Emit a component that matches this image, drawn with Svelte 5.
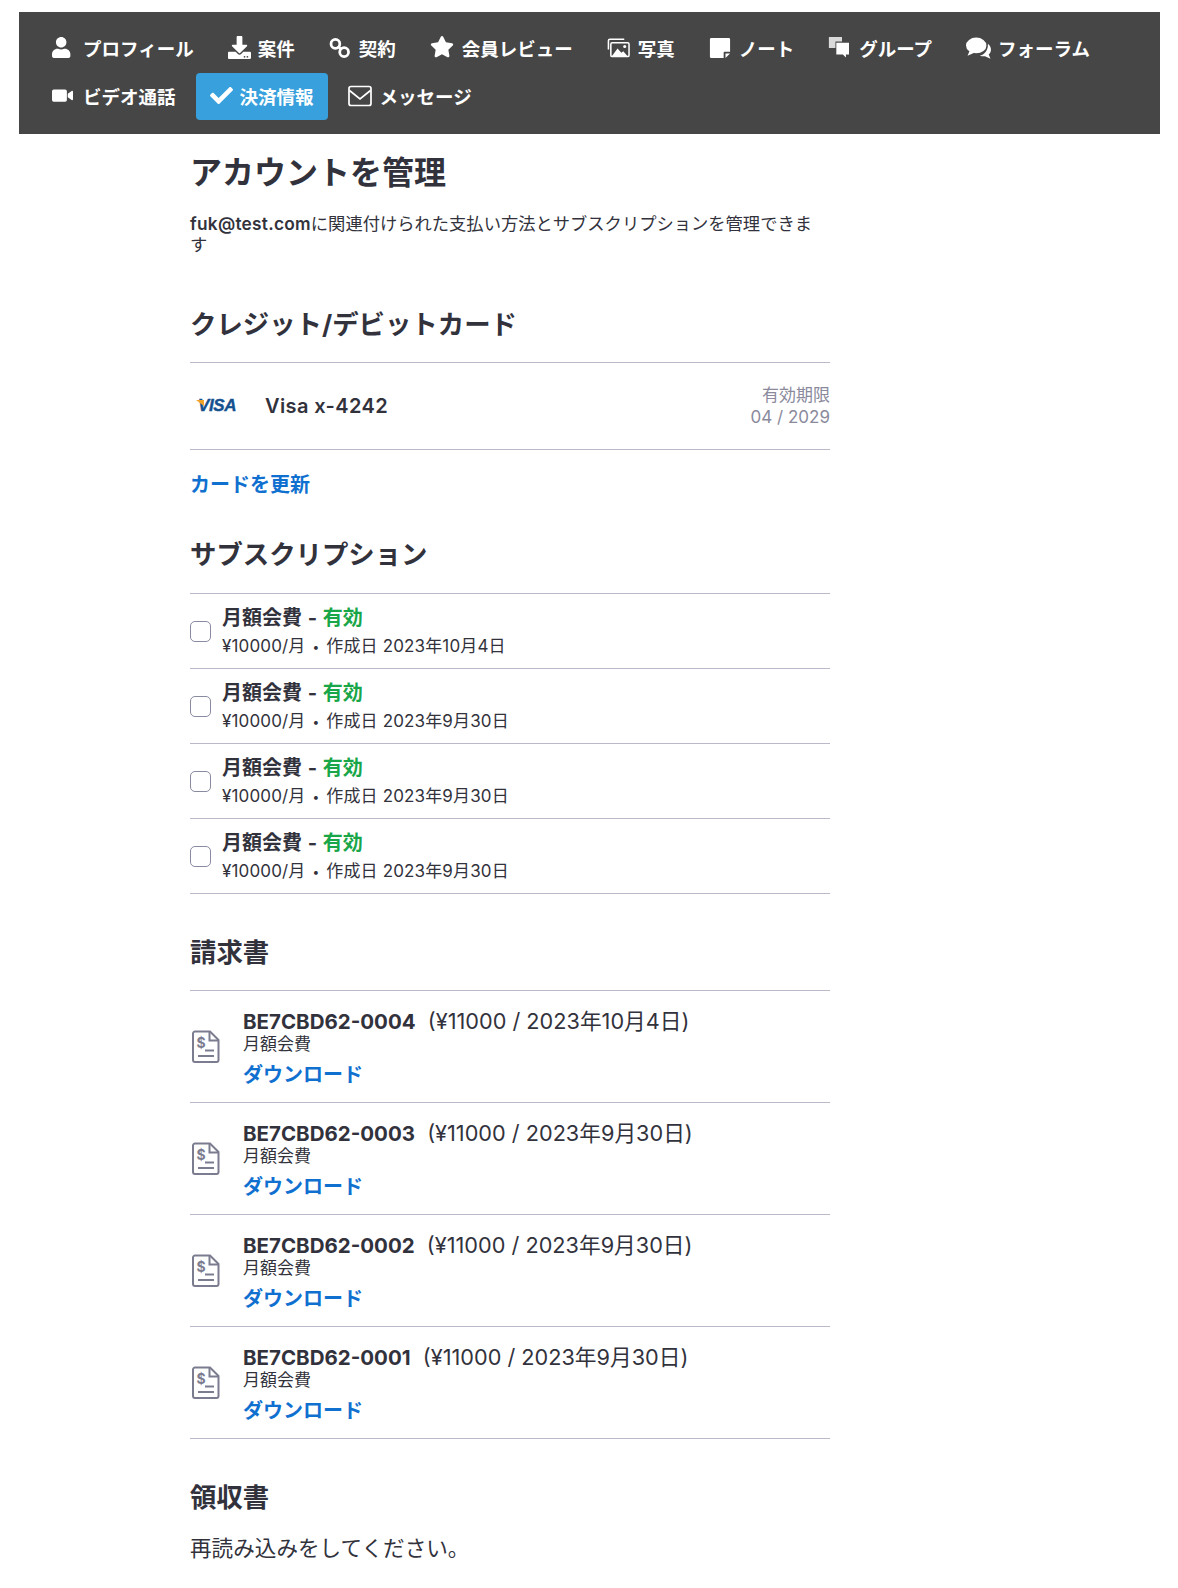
<script lang="ts">
    const SUBS = ['2023年10月4日', '2023年9月30日', '2023年9月30日', '2023年9月30日'];
    const INVOICES = [
        { id: 'BE7CBD62-0004', date: '2023年10月4日' },
        { id: 'BE7CBD62-0003', date: '2023年9月30日' },
        { id: 'BE7CBD62-0002', date: '2023年9月30日' },
        { id: 'BE7CBD62-0001', date: '2023年9月30日' },
    ];
    const NAV = [
        { label: 'プロフィール', icon: 'user', w: 21, gap: 10 },
        { label: '案件', icon: 'download', w: 23, gap: 7 },
        { label: '契約', icon: 'link', w: 22, gap: 8 },
        { label: '会員レビュー', icon: 'star', w: 24, gap: 8 },
        { label: '写真', icon: 'images', w: 23, gap: 8 },
        { label: 'ノート', icon: 'note', w: 22, gap: 8 },
        { label: 'グループ', icon: 'group', w: 21, gap: 10 },
        { label: 'フォーラム', icon: 'comments', w: 25, gap: 7 },
        { label: 'ビデオ通話', icon: 'video', w: 21, gap: 10 },
        { label: '決済情報', icon: 'check', w: 23, gap: 7, active: true },
        { label: 'メッセージ', icon: 'mail', w: 24, gap: 8 },
    ];
</script>

{#snippet navIcon(name: string, w: number, gap: number)}
    <svg class="nav-icon" viewBox="0 0 24 24" style="width:{w}px;height:{w}px;margin-right:{gap}px" aria-hidden="true">
        {#if name === 'user'}
            <g transform="scale(0.0469)"><path d="M224 256c70.7 0 128-57.3 128-128S294.7 0 224 0 96 57.3 96 128s57.3 128 128 128zm89.6 32h-16.7c-22.2 10.2-46.9 16-72.9 16s-50.6-5.8-72.9-16h-16.7C60.2 288 0 348.2 0 422.4V464c0 26.5 21.5 48 48 48h352c26.5 0 48-21.5 48-48v-41.6c0-74.2-60.2-134.4-134.4-134.4z" /></g>
        {:else if name === 'download'}
            <g transform="scale(0.0469)"><path d="M216 0h80c13.3 0 24 10.7 24 24v168h87.7c17.8 0 26.7 21.5 14.1 34.1L269.7 378.3c-7.5 7.5-19.8 7.5-27.3 0L90.1 226.1c-12.6-12.6-3.7-34.1 14.1-34.1H192V24c0-13.3 10.7-24 24-24zm296 376v112c0 13.3-10.7 24-24 24H24c-13.3 0-24-10.7-24-24V376c0-13.3 10.7-24 24-24h146.7l49 49c20.1 20.1 52.5 20.1 72.6 0l49-49H488c13.3 0 24 10.7 24 24zm-124 88c0-11-9-20-20-20s-20 9-20 20 9 20 20 20 20-9 20-20zm64 0c0-11-9-20-20-20s-20 9-20 20 9 20 20 20 20-9 20-20z" /></g>
        {:else if name === 'link'}
            <g fill="none" stroke="#fff" stroke-width="3">
                <circle cx="7" cy="7.500" r="4.800" />
                <circle cx="16.500" cy="16.500" r="4.800" />
                <path d="M9.500 10l4.500 4" />
            </g>
        {:else if name === 'star'}
            <g transform="scale(0.0417)"><path d="M259.3 17.8L194 150.2 47.9 171.5c-26.2 3.8-36.7 36.1-17.7 54.6l105.7 103-25 145.5c-4.5 26.3 23.2 46 46.4 33.7L288 439.6l130.7 68.7c23.2 12.2 50.9-7.4 46.4-33.7l-25-145.5 105.7-103c19-18.5 8.5-50.8-17.7-54.6L382 150.2 316.7 17.8c-11.7-23.6-45.6-23.9-57.4 0z" /></g>
        {:else if name === 'images'}
            <g fill="none" stroke="#fff" stroke-width="1.600">
                <path d="M1.500 14V5a1.500 1.500 0 0 1 1.500-1.500h15" />
                <rect x="4" y="7" width="19" height="14.500" rx="1.500" />
            </g>
            <circle cx="18.500" cy="11" r="1.600" />
            <path d="M5 21l6-8 4 4.500 2-1.500 4.500 5z" />
        {:else if name === 'note'}
            <path d="M2.500 1h19A1.500 1.500 0 0 1 23 2.500V16h-6a1 1 0 0 0-1 1v6H2.500A1.500 1.500 0 0 1 1 21.500v-19A1.500 1.500 0 0 1 2.500 1zM18 18h5l-5 5z" />
        {:else if name === 'group'}
            <path d="M1 0h15v5H8.500v7.500H1z" fill-opacity="0.8" />
            <path d="M9.500 6.500H24V20h-3.500v3.500L17 20H9.500z" />
        {:else if name === 'comments'}
            <ellipse cx="9.800" cy="10" rx="9.800" ry="7.500" />
            <path d="M3.500 15L1.500 20l6.500-3z" />
            <path d="M21 8.500c3.600 2.900 4 7.400.8 10.300l1.700 4-5.300-2.500c-1.700.3-3.500.1-5-.7 4.800-.4 8.300-6 7.800-11.100z" />
        {:else if name === 'video'}
            <path d="M2 5h13a2 2 0 0 1 2 2v10a2 2 0 0 1-2 2H2a2 2 0 0 1-2-2V7a2 2 0 0 1 2-2zM18 10l4.500-3.200c.7-.5 1.500 0 1.500.8v8.800c0 .8-.8 1.300-1.500.8L18 14z" />
        {:else if name === 'check'}
            <g transform="scale(0.0469)"><path d="M173.898 439.404l-166.400-166.400c-9.997-9.997-9.997-26.206 0-36.204l36.203-36.204c9.997-9.998 26.207-9.998 36.204 0L192 312.690 432.095 72.596c9.997-9.997 26.207-9.997 36.204 0l36.203 36.204c9.997 9.997 9.997 26.206 0 36.204l-294.400 294.401c-9.998 9.997-26.207 9.997-36.204-.001z" /></g>
        {:else if name === 'mail'}
            <g fill="none" stroke="#fff" stroke-width="1.700">
                <rect x="1" y="2.500" width="22" height="19" rx="2" />
                <path d="M1.500 6.500L12 15l10.500-8.500" />
            </g>
        {/if}
    </svg>
{/snippet}

<div class="page">
    <nav class="nav">
        {#each NAV as item}
            <a class="nav-item" class:active={item.active}>
                {@render navIcon(item.icon, item.w, item.gap)}
                <span>{item.label}</span>
            </a>
        {/each}
    </nav>

    <main class="content">
        <h1>アカウントを管理</h1>
        <p class="intro"><strong>fuk@test.com</strong>に関連付けられた支払い方法とサブスクリプションを管理できま<br />す</p>

        <h2 class="card-head">クレジット/デビットカード</h2>
        <div class="card-row">
            <span class="visa"><i></i>VISA</span>
            <span class="card-name">Visa x-4242</span>
            <span class="expiry">有効期限<br />04 / 2029</span>
        </div>
        <a class="link update">カードを更新</a>

        <h2 class="sub-head">サブスクリプション</h2>
        <ul class="subs">
            {#each SUBS as date}
                <li>
                    <span class="checkbox"></span>
                    <div>
                        <div class="sub-title">月額会費 - <span class="ok">有効</span></div>
                        <div class="sub-meta">¥10000/月 <span class="dot">•</span> 作成日 {date}</div>
                    </div>
                </li>
            {/each}
        </ul>

        <h2 class="inv-head">請求書</h2>
        <ul class="invoices">
            {#each INVOICES as inv}
                <li>
                    <svg class="file" viewBox="0 0 28 33" aria-hidden="true">
                        <path d="M3 1.500H18L26.500 10v20a2 2 0 0 1-2 2H3a2 2 0 0 1-2-2V3.500a2 2 0 0 1 2-2z" fill="none" stroke="#7c7c90" stroke-width="2" />
                        <path d="M17.500 2v8.500H26M13 20.500h9M6 26h16" fill="none" stroke="#7c7c90" stroke-width="2" />
                        <text x="4.500" y="18" font-size="14" font-weight="700" fill="#7c7c90">$</text>
                    </svg>
                    <div class="inv-body">
                        <div class="inv-title"><strong>{inv.id}</strong>&nbsp; (¥11000 / {inv.date})</div>
                        <div class="inv-plan">月額会費</div>
                        <a class="link">ダウンロード</a>
                    </div>
                </li>
            {/each}
        </ul>

        <h2 class="rec-head">領収書</h2>
        <p class="reload">再読み込みをしてください。</p>
    </main>
</div>

<style>
    :global(body) {
        margin: 0;
        background: #fff;
    }

    .page {
        height: 1588px;
        overflow: hidden;
        font-family: Inter, "Noto Sans CJK JP", sans-serif;
        color: #32323c;
    }

    .nav {
        margin: 12px 18px 0 19px;
        padding: 13px 16px 14px 16px;
        background: #464646;
        display: flex;
        flex-wrap: wrap;
        row-gap: 1px;
    }

    .nav-item {
        display: flex;
        align-items: center;
        box-sizing: border-box;
        height: 47px;
        padding: 0 14px 2px;
        margin: 0 3px;
        border-radius: 4px;
        color: #fff;
        font-family: "Noto Sans CJK JP", sans-serif;
        font-size: 18.5px;
        font-weight: 700;
    }

    .nav-item.active {
        background: #38a0dc;
    }

    .nav-icon {
        fill: #fff;
        flex: none;
    }

    .content {
        width: 640px;
        margin-left: 190px;
    }

    h1,
    h2 {
        margin: 0;
        font-weight: 700;
        line-height: 1.2;
    }

    h1 {
        font-size: 32px;
        padding-top: 20px;
    }

    h2 {
        font-size: 26.4px;
    }

    .intro {
        margin: 21px 0 0;
        font-size: 17.3px;
        line-height: 21px;
    }

    .intro strong {
        font-weight: 600;
        letter-spacing: 0.25px;
    }

    .card-head {
        margin-top: 54px;
        padding-bottom: 21px;
        border-bottom: 1px solid #b9b9c9;
    }

    .card-row {
        display: flex;
        align-items: center;
        height: 86px;
        border-bottom: 1px solid #b9b9c9;
    }

    .visa {
        position: relative;
        width: 75px;
        padding-left: 8px;
        box-sizing: border-box;
        font-family: "Liberation Sans", sans-serif;
        font-size: 17px;
        font-weight: 700;
        font-style: italic;
        letter-spacing: -0.4px;
        color: #15508f;
        -webkit-text-stroke: 0.4px #15508f;
    }

    .visa i {
        position: absolute;
        left: 6px;
        top: 4px;
        width: 8px;
        height: 6px;
        background: #f0a52a;
        clip-path: polygon(0 0, 100% 0, 100% 100%);
    }

    .card-name {
        flex: 1;
        font-size: 20px;
        font-weight: 600;
        letter-spacing: 0.4px;
    }

    .expiry {
        text-align: right;
        font-size: 17px;
        line-height: 22px;
        color: #8a8a9c;
    }

    .link {
        color: #1070d0;
        font-size: 20px;
        font-weight: 600;
    }

    .update {
        display: block;
        margin-top: 20px;
        line-height: 30px;
    }

    .sub-head {
        margin-top: 39px;
        padding-bottom: 22px;
        border-bottom: 1px solid #b9b9c9;
    }

    .subs,
    .invoices {
        list-style: none;
        margin: 0;
        padding: 0;
    }

    .subs li {
        display: flex;
        align-items: center;
        box-sizing: border-box;
        height: 75px;
        padding-top: 4px;
        border-bottom: 1px solid #b9b9c9;
    }

    .checkbox {
        flex: none;
        width: 19px;
        height: 19px;
        margin: 0 11px 2px 0;
        border: 1px solid #8a8aa0;
        border-radius: 5px;
    }

    .sub-title {
        font-size: 20px;
        font-weight: 700;
        line-height: 28px;
        word-spacing: 1px;
    }

    .ok {
        color: #18a648;
    }

    .sub-meta {
        font-size: 17px;
        line-height: 29px;
        letter-spacing: 0.15px;
    }

    .dot {
        font-size: 12px;
        margin: 0 2px;
        vertical-align: 1px;
    }

    .inv-head {
        margin-top: 43px;
        padding-bottom: 22px;
        border-bottom: 1px solid #b9b9c9;
    }

    .invoices li {
        display: flex;
        align-items: center;
        height: 111px;
        border-bottom: 1px solid #b9b9c9;
    }

    .file {
        flex: none;
        width: 28px;
        height: 33px;
        margin: 0 23px 0 2px;
    }

    .inv-body {
        align-self: flex-start;
        padding-top: 17px;
    }

    .inv-title {
        font-size: 21.7px;
        line-height: 27px;
    }

    .inv-title strong {
        font-size: 20.5px;
        font-weight: 700;
    }

    .inv-plan {
        font-size: 17px;
        line-height: 18px;
    }

    .inv-body .link {
        display: block;
        line-height: 44px;
    }

    .rec-head {
        margin-top: 43px;
    }

    .reload {
        margin: 17px 0 0;
        font-size: 21.6px;
    }
</style>
